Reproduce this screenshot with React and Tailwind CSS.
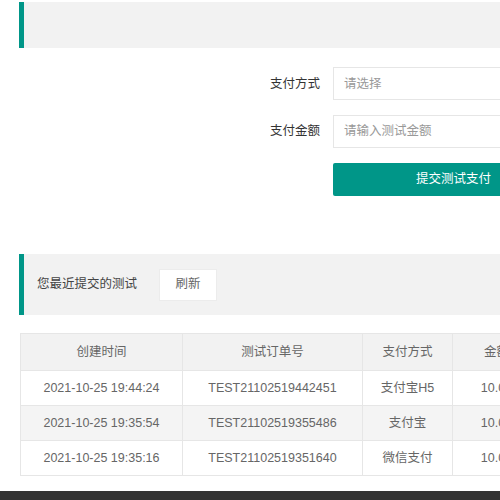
export default function App() {
  const rows = [
    ["2021-10-25 19:44:24", "TEST21102519442451", "支付宝H5", "10.00", "未支付"],
    ["2021-10-25 19:35:54", "TEST21102519355486", "支付宝", "10.00", "未支付"],
    ["2021-10-25 19:35:16", "TEST21102519351640", "微信支付", "10.00", "未支付"],
  ];
  const cols = ["w-[162px]", "w-[180px]", "w-[90px]", "w-[88px]", "w-[120px]"];
  return (
    <div className="w-[500px] h-[500px] overflow-hidden bg-white font-['Liberation_Sans','Noto_Sans_CJK_SC',sans-serif] text-[12.5px] text-[#666]">
      <div className="w-[800px] flex flex-col">
        <div className="mt-[2px] ml-[19px] h-[46px] border-l-[5px] border-[#009688] bg-[#f2f2f2]"></div>

        <div className="mt-[19px] flex flex-col gap-[15px]">
          <div className="flex items-center">
            <div className="w-[333px] pr-[13px] pt-[2px] text-right text-[#333]">支付方式</div>
            <div className="w-[241px] h-[33px] border border-[#e6e6e6] bg-white flex items-center pl-[10px] pt-[2px] text-[#999]">请选择</div>
          </div>
          <div className="flex items-center">
            <div className="w-[333px] pr-[13px] text-right text-[#333]">支付金额</div>
            <div className="w-[241px] h-[33px] border border-[#e6e6e6] bg-white flex items-center pl-[10px] text-[#999]">请输入测试金额</div>
          </div>
          <div className="flex items-center">
            <div className="w-[333px]"></div>
            <div className="w-[241px] h-[33px] bg-[#009688] rounded-[2px] text-white flex items-center justify-center">提交测试支付</div>
          </div>
        </div>

        <div className="mt-[58px] ml-[19px] h-[61px] border-l-[5px] border-[#009688] bg-[#f2f2f2] flex items-center pl-[13px]">
          <span className="text-[#444]">您最近提交的测试</span>
          <div className="ml-[22px] w-[58px] h-[32px] bg-white border border-[#ececec] flex items-center justify-center text-[#666]">刷新</div>
        </div>

        <div className="mt-[18px] ml-[20px] border border-[#e6e6e6] w-fit">
          <div className="flex h-[36px] bg-[#f2f2f2]">
            {["创建时间", "测试订单号", "支付方式", "金额", "状态"].map((h, i) => (
              <div key={i} className={`${cols[i]} flex items-center justify-center ${i < 4 ? "border-r border-[#e6e6e6]" : ""}`}>{h}</div>
            ))}
          </div>
          {rows.map((r, ri) => (
            <div key={ri} className={`flex h-[35px] border-t border-[#e6e6e6] ${ri === 1 ? "bg-[#f4f4f4]" : "bg-white"}`}>
              {r.map((c, i) => (
                <div key={i} className={`${cols[i]} flex items-center justify-center ${i < 4 ? "border-r border-[#e6e6e6]" : ""}`}>{c}</div>
              ))}
            </div>
          ))}
        </div>

        <div className="mt-[15px] h-[40px] bg-[#333]"></div>
      </div>
    </div>
  );
}
